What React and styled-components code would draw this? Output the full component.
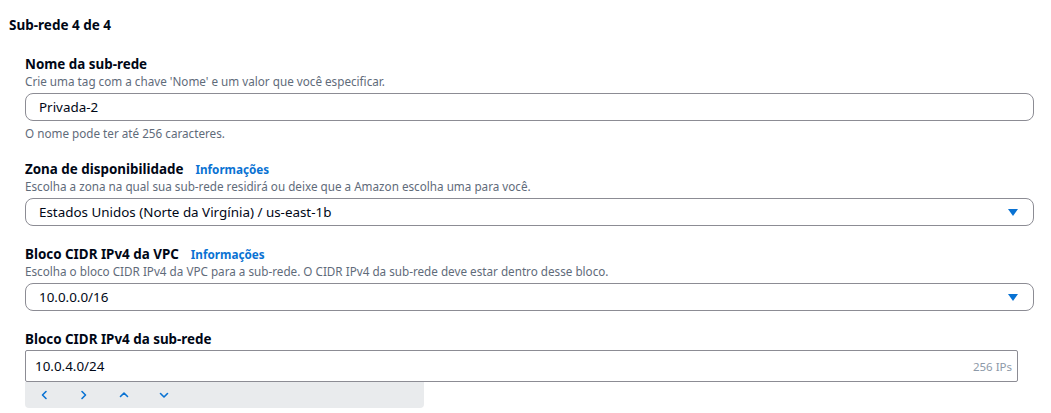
import styled, { createGlobalStyle } from 'styled-components';

const GlobalStyle = createGlobalStyle`
    body {
        margin: 0;
        background: #ffffff;
        font-family: "Noto Sans", "Open Sans", Arial, sans-serif;
        color: #000716;
    }
`

const Page = styled.div`
    width: 1051px;
    height: 413px;
    overflow: hidden;
    padding: 16px 0 0 9px;
    box-sizing: border-box;
`

const Title = styled.h2`
    margin: 0 0 21px;
    font-size: 13.5px;
    line-height: 18px;
    font-weight: 700;
`

const Fields = styled.div`
    padding-left: 16px;
    display: flex;
    flex-direction: column;
    gap: 19px;
`

const Field = styled.div`
    display: flex;
    flex-direction: column;
`

const Label = styled.div`
    display: flex;
    align-items: baseline;
    gap: 12px;
    font-size: 13.4px;
    line-height: 18px;
    font-weight: 700;
    margin-bottom: ${p => p.$tight ? '2px' : '0'};

    a {
        color: #0972d3;
        font-size: 11.7px;
        font-weight: 700;
        text-decoration: none;
    }
`

const Description = styled.div`
    font-size: 11.7px;
    line-height: 16px;
    color: #5f6b7a;
    margin-bottom: 4px;
`

const Hint = styled.div`
    font-size: 11.7px;
    line-height: 16px;
    color: #5f6b7a;
    margin-top: 4px;
`

const Box = styled.div`
    box-sizing: border-box;
    display: flex;
    align-items: center;
    justify-content: space-between;
    width: ${p => p.$width || '1009px'};
    height: ${p => p.$height || '28px'};
    padding: 0 ${p => p.$padRight || '13px'} 0 ${p => p.$padLeft || '13px'};
    border: 1px solid #8c8c94;
    border-radius: ${p => p.$radius || '8px'};
    font-size: 13.4px;
    color: #000716;
    background: #fff;
`

const Caret = styled.span`
    width: 0;
    height: 0;
    border-left: 5.5px solid transparent;
    border-right: 5.5px solid transparent;
    border-top: 7px solid #0972d3;
    margin-right: 2px;
`

const Count = styled.span`
    font-size: 11.5px;
    color: #8d99a8;
`

const KeyBar = styled.div`
    width: 399px;
    height: 26px;
    background: #e9ebed;
    border-radius: 0 0 4px 4px;
    display: flex;
    align-items: center;
    padding-left: 10px;
    gap: 22px;
    box-sizing: border-box;
`

const KeyIcon = styled.svg`
    width: 18px;
    height: 18px;
    fill: none;
    stroke: #0972d3;
    stroke-width: 1.6;
    stroke-linecap: round;
    stroke-linejoin: round;
`

const chevrons = [
    'M11 5.5 L7.5 9 L11 12.5',
    'M7 5.5 L10.5 9 L7 12.5',
    'M5.5 10.5 L9 7 L12.5 10.5',
    'M5.5 7.5 L9 11 L12.5 7.5',
];

const App = () => {
    return (
        <>
            <GlobalStyle />
            <Page>
                <Title>Sub-rede 4 de 4</Title>
                <Fields>
                    <Field>
                        <Label>Nome da sub-rede</Label>
                        <Description>Crie uma tag com a chave 'Nome' e um valor que você especificar.</Description>
                        <Box>Privada-2</Box>
                        <Hint>O nome pode ter até 256 caracteres.</Hint>
                    </Field>
                    <Field>
                        <Label>Zona de disponibilidade <a href="#">Informações</a></Label>
                        <Description>Escolha a zona na qual sua sub-rede residirá ou deixe que a Amazon escolha uma para você.</Description>
                        <Box>
                            <span>Estados Unidos (Norte da Virgínia) / us-east-1b</span>
                            <Caret />
                        </Box>
                    </Field>
                    <Field>
                        <Label>Bloco CIDR IPv4 da VPC <a href="#">Informações</a></Label>
                        <Description>Escolha o bloco CIDR IPv4 da VPC para a sub-rede. O CIDR IPv4 da sub-rede deve estar dentro desse bloco.</Description>
                        <Box>
                            <span>10.0.0.0/16</span>
                            <Caret />
                        </Box>
                    </Field>
                    <Field>
                        <Label $tight>Bloco CIDR IPv4 da sub-rede</Label>
                        <Box $width="993px" $height="32px" $radius="2px" $padLeft="9px" $padRight="5px">
                            <span>10.0.4.0/24</span>
                            <Count>256 IPs</Count>
                        </Box>
                        <KeyBar>
                            {chevrons.map(d => (
                                <KeyIcon key={d} viewBox="0 0 18 18">
                                    <path d={d} />
                                </KeyIcon>
                            ))}
                        </KeyBar>
                    </Field>
                </Fields>
            </Page>
        </>
    );
}

export default App;
